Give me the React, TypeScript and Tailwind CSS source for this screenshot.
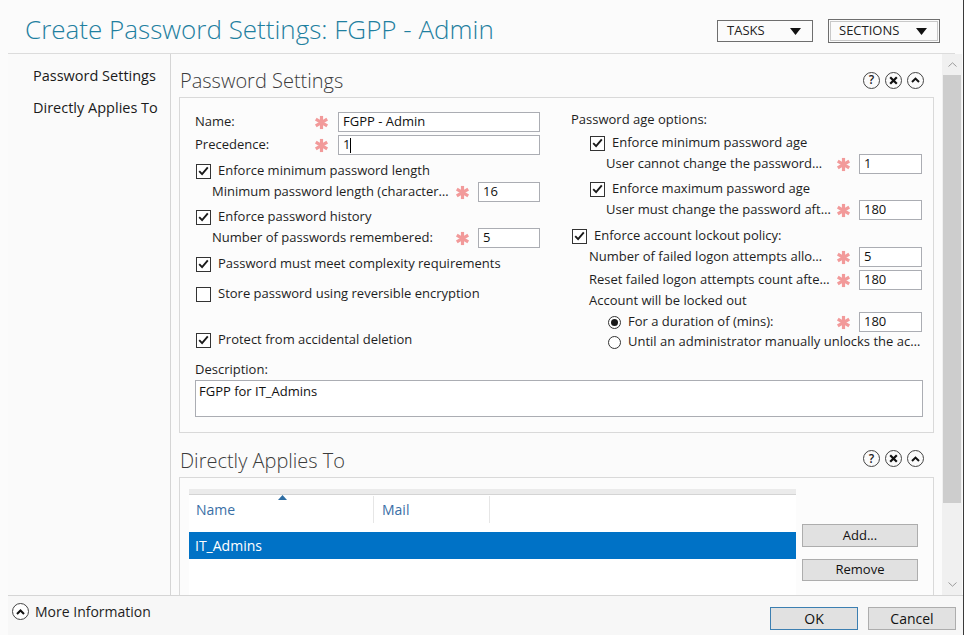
import React from "react";

function Check({ on = true }: { on?: boolean }) {
  return (
    <span className="w-[15px] h-[15px] border border-[#333] bg-white flex items-center justify-center shrink-0">
      {on && (
        <svg width="11" height="10" viewBox="0 0 11 10">
          <path d="M1.2 5.2 L4.1 8.2 L9.8 1.4" fill="none" stroke="#1a1a1a" strokeWidth="1.9" />
        </svg>
      )}
    </span>
  );
}

function Radio({ on }: { on: boolean }) {
  return (
    <span className="w-[13px] h-[13px] rounded-full border border-[#333] bg-white flex items-center justify-center shrink-0">
      {on && <span className="w-[7px] h-[7px] rounded-full bg-[#1a1a1a]" />}
    </span>
  );
}

function Star() {
  return (
    <svg width="15" height="15" viewBox="0 0 16 16">
      <g stroke="#f29a9a" strokeWidth="3.4">
        <line x1="8" y1="1" x2="8" y2="15" />
        <line x1="1.9" y1="4.5" x2="14.1" y2="11.5" />
        <line x1="1.9" y1="11.5" x2="14.1" y2="4.5" />
      </g>
    </svg>
  );
}

function Input({ w, value, cursor }: { w: string; value: string; cursor?: boolean }) {
  return (
    <div className={`h-[20px] border border-[#abadb3] bg-white flex items-center pl-[4px] text-[13px] text-[#111] shrink-0 ${w}`}>
      <span>{value}</span>
      {cursor && <span className="w-[1px] h-[15px] bg-black" />}
    </div>
  );
}

function CbRow({ on = true, label, cls }: { on?: boolean; label: string; cls: string }) {
  return (
    <div className={`flex items-center h-[18px] gap-[7px] ${cls}`}>
      <Check on={on} />
      <span className="whitespace-nowrap">{label}</span>
    </div>
  );
}

function LeftField({ label, value, cls }: { label: string; value: string; cls: string }) {
  return (
    <div className={`flex items-center h-[20px] pl-[17px] ${cls}`}>
      <span className="w-[242px] whitespace-nowrap overflow-hidden">{label}</span>
      <span className="w-[17px] flex justify-center">
        <Star />
      </span>
      <span className="w-[7px]" />
      <Input w="w-[62px]" value={value} />
    </div>
  );
}

function RightField({ label, value, cls, labelW }: { label: string; value: string; cls: string; labelW: string }) {
  return (
    <div className={`flex items-center h-[20px] ${cls}`}>
      <span className={`whitespace-nowrap overflow-hidden ${labelW}`}>{label}</span>
      <span className="w-[17px] flex justify-center">
        <Star />
      </span>
      <span className="w-[7px]" />
      <Input w="w-[63px]" value={value} />
    </div>
  );
}

function SectionIcons() {
  return (
    <div className="flex items-center gap-[5px]">
      <span className="w-[17px] h-[17px] shrink-0 rounded-full border border-[#444] flex items-center justify-center text-[12px] leading-none text-[#222] font-semibold">
        ?
      </span>
      <span className="w-[17px] h-[17px] shrink-0 rounded-full border border-[#444] flex items-center justify-center">
        <svg width="9" height="9" viewBox="0 0 9 9">
          <path d="M1.2 1.2L7.8 7.8M7.8 1.2L1.2 7.8" stroke="#111" strokeWidth="2.2" />
        </svg>
      </span>
      <span className="w-[17px] h-[17px] shrink-0 rounded-full border border-[#444] flex items-center justify-center">
        <svg width="9" height="6" viewBox="0 0 9 6">
          <path d="M1 5L4.5 1.6L8 5" stroke="#111" strokeWidth="2" fill="none" />
        </svg>
      </span>
    </div>
  );
}

function Tri() {
  return (
    <svg width="11" height="7" viewBox="0 0 11 7">
      <path d="M0 0H11L5.5 7Z" fill="#111" />
    </svg>
  );
}

export default function App() {
  return (
    <div className="w-[968px] h-[635px] bg-white overflow-hidden font-['Open_Sans','Noto_Sans',sans-serif] text-[13px] text-[#1e1e1e]">
      <div className="w-[964px] h-[635px] border-r border-[#3a3a3a] bg-[#fbfbfb] flex flex-col">
        {/* Header */}
        <div className="h-[54px] mx-[8px] border-b border-[#dcdcdc] flex items-center shrink-0">
          <div className="pl-[17px] pt-[5px] text-[26px] font-light text-[#1f80a0] leading-none flex-1 whitespace-nowrap">
            Create Password Settings: FGPP - Admin
          </div>
          <div className="flex items-center gap-[15px] pr-[15px] pt-[9px]">
            <div className="w-[96px] h-[22px] border border-[#6e6e6e] flex items-center justify-between pl-[9px] pr-[11px] text-[13px] text-[#222]">
              <span>TASKS</span>
              <Tri />
            </div>
            <div className="w-[112px] h-[24px] border border-[#6e6e6e] p-[1px]">
              <div className="w-full h-full border border-[#c8c8c8] flex items-center justify-between pl-[8px] pr-[10px] text-[13px] text-[#222]">
                <span>SECTIONS</span>
                <Tri />
              </div>
            </div>
          </div>
        </div>

        {/* Body */}
        <div className="flex h-[541px] shrink-0">
          {/* Nav */}
          <div className="ml-[8px] w-[163px] border-r border-[#d5d5d5] bg-[#fafafa] pt-[12px] pl-[25px] text-[14.5px] text-[#1a1a1a]">
            <div className="h-[20px] leading-[20px]">Password Settings</div>
            <div className="h-[20px] leading-[20px] mt-[12px]">Directly Applies To</div>
          </div>

          {/* Main */}
          <div className="flex-1 flex">
            <div className="flex-1 flex flex-col pl-[8px] pr-[8px]">
              {/* Section 1 header */}
              <div className="h-[43px] pt-[9px] flex items-center justify-between shrink-0">
                <span className="pl-[1px] pt-[2px] text-[20px] font-light text-[#3c3c3c]">Password Settings</span>
                <div className="pr-[10px]">
                  <SectionIcons />
                </div>
              </div>
              {/* Section 1 box */}
              <div className="h-[336px] border border-[#d9d9d9] bg-[#fcfcfc] shrink-0 pl-[15px] pr-[10px] pt-[13px]">
                <div className="flex h-[241px]">
                  {/* Left column */}
                  <div className="w-[376px] flex flex-col">
                    <div className="flex items-center h-[20px] mt-[1px]">
                      <span className="w-[118px]">Name:</span>
                      <span className="w-[17px] flex justify-center">
                        <Star />
                      </span>
                      <span className="w-[8px]" />
                      <Input w="w-[202px]" value="FGPP - Admin" />
                    </div>
                    <div className="flex items-center h-[20px] mt-[3px]">
                      <span className="w-[118px]">Precedence:</span>
                      <span className="w-[17px] flex justify-center">
                        <Star />
                      </span>
                      <span className="w-[8px]" />
                      <Input w="w-[202px]" value="1" cursor />
                    </div>
                    <CbRow label="Enforce minimum password length" cls="mt-[7px] pl-[1px]" />
                    <LeftField label="Minimum password length (character…" value="16" cls="mt-[2px]" />
                    <CbRow label="Enforce password history" cls="mt-[6px] pl-[1px]" />
                    <LeftField label="Number of passwords remembered:" value="5" cls="mt-[2px]" />
                    <CbRow label="Password must meet complexity requirements" cls="mt-[7px] pl-[1px]" />
                    <CbRow on={false} label="Store password using reversible encryption" cls="mt-[12px] pl-[1px]" />
                    <CbRow label="Protect from accidental deletion" cls="mt-[28px] pl-[1px]" />
                  </div>
                  {/* Right column */}
                  <div className="flex-1 flex flex-col">
                    <div className="h-[18px] flex items-center">Password age options:</div>
                    <CbRow label="Enforce minimum password age" cls="mt-[5px] pl-[19px]" />
                    <RightField label="User cannot change the password…" value="1" cls="mt-[2px] pl-[35px]" labelW="w-[229px]" />
                    <CbRow label="Enforce maximum password age" cls="mt-[6px] pl-[19px]" />
                    <RightField label="User must change the password aft…" value="180" cls="mt-[2px] pl-[35px]" labelW="w-[229px]" />
                    <CbRow label="Enforce account lockout policy:" cls="mt-[7px] pl-[1px]" />
                    <RightField label="Number of failed logon attempts allo…" value="5" cls="mt-[2px] pl-[18px]" labelW="w-[246px]" />
                    <RightField label="Reset failed logon attempts count afte…" value="180" cls="mt-[3px] pl-[18px]" labelW="w-[246px]" />
                    <div className="h-[18px] flex items-center mt-[2px] pl-[18px]">Account will be locked out</div>
                    <div className="flex items-center h-[20px] mt-[2px] pl-[37px]">
                      <Radio on />
                      <span className="w-[214px] pl-[7px] whitespace-nowrap">For a duration of (mins):</span>
                      <span className="w-[17px] flex justify-center">
                        <Star />
                      </span>
                      <span className="w-[7px]" />
                      <Input w="w-[63px]" value="180" />
                    </div>
                    <div className="flex items-center h-[18px] mt-[1px] pl-[37px]">
                      <Radio on={false} />
                      <span className="pl-[7px] whitespace-nowrap">Until an administrator manually unlocks the ac…</span>
                    </div>
                  </div>
                </div>
                <div className="h-[18px] flex items-center mt-[9px]">Description:</div>
                <div className="h-[37px] mt-[1px] border border-[#abadb3] bg-white pl-[3px] pt-[1px] text-[13px] text-[#111]">
                  FGPP for IT_Admins
                </div>
              </div>

              {/* Section 2 header */}
              <div className="h-[44px] pt-[9px] flex items-center justify-between shrink-0">
                <span className="pl-[1px] pt-[2px] text-[20px] font-light text-[#3c3c3c]">Directly Applies To</span>
                <div className="pr-[10px] pb-[2px]">
                  <SectionIcons />
                </div>
              </div>
              {/* Section 2 box */}
              <div className="flex-1 border-t border-l border-r border-[#d9d9d9] bg-[#fcfcfc] pl-[9px] pt-[11px] flex min-h-0">
                <div className="w-[607px] bg-white flex flex-col">
                  <div className="h-[6px] bg-[#ebebeb] border-b border-[#d4d4d4]" />
                  <div className="h-[35px] flex text-[14px] text-[#3a6fa6] relative">
                    <div className="w-[185px] border-r border-[#e6e6e6] h-[27px] pl-[7px] flex items-center mt-[1px]">Name</div>
                    <div className="w-[116px] border-r border-[#e6e6e6] h-[27px] pl-[8px] flex items-center mt-[1px]">Mail</div>
                    <svg className="absolute left-[89px] top-[0px]" width="9" height="5" viewBox="0 0 9 5">
                      <path d="M0 5L4.5 0L9 5Z" fill="#2d6da3" />
                    </svg>
                  </div>
                  <div className="h-[27px] mt-[2px] bg-[#0072c6] text-white text-[14px] pl-[6px] flex items-center">IT_Admins</div>
                </div>
                <div className="pl-[6px] pt-[35px] flex flex-col gap-[12px]">
                  <div className="w-[116px] h-[23px] border border-[#adadad] bg-[#e1e1e1] flex items-center justify-center text-[13px] text-[#111]">
                    Add...
                  </div>
                  <div className="w-[116px] h-[22px] border border-[#adadad] bg-[#e1e1e1] flex items-center justify-center text-[13px] text-[#111]">
                    Remove
                  </div>
                </div>
              </div>
            </div>

            {/* Scrollbar */}
            <div className="w-[20px] mr-[1px] bg-[#f0f0f0] flex flex-col items-center">
              <div className="h-[21px] flex items-center justify-center">
                <svg width="9" height="5" viewBox="0 0 9 5">
                  <path d="M0.5 4.5L4.5 0.8L8.5 4.5" stroke="#9a9a9a" strokeWidth="1" fill="none" />
                </svg>
              </div>
              <div className="w-[18px] h-[428px] bg-[#cdcdcd]" />
              <div className="flex-1" />
              <div className="h-[21px] flex items-center justify-center">
                <svg width="9" height="5" viewBox="0 0 9 5">
                  <path d="M0.5 0.5L4.5 4.2L8.5 0.5" stroke="#9a9a9a" strokeWidth="1" fill="none" />
                </svg>
              </div>
            </div>
          </div>
        </div>

        {/* Footer */}
        <div className="flex-1 ml-[8px] border-t border-[#d5d5d5] bg-[#f7f7f7] flex items-start pl-[4px] pr-[7px]">
          <div className="flex items-center gap-[6px] mt-[7px] flex-1">
            <span className="w-[17px] h-[17px] rounded-full border border-[#444] flex items-center justify-center bg-white">
              <svg width="9" height="6" viewBox="0 0 9 6">
                <path d="M1 5L4.5 1.5L8 5" stroke="#111" strokeWidth="2" fill="none" />
              </svg>
            </span>
            <span className="text-[14px] text-[#1e1e1e] leading-[17px]">More Information</span>
          </div>
          <div className="flex gap-[10px] mt-[11px]">
            <div className="w-[88px] h-[23px] border border-[#3c7fb1] bg-[#e1e1e1] flex items-center justify-center text-[14px] text-[#111]">
              OK
            </div>
            <div className="w-[88px] h-[23px] border border-[#adadad] bg-[#e1e1e1] flex items-center justify-center text-[14px] text-[#111]">
              Cancel
            </div>
          </div>
        </div>
      </div>
    </div>
  );
}
